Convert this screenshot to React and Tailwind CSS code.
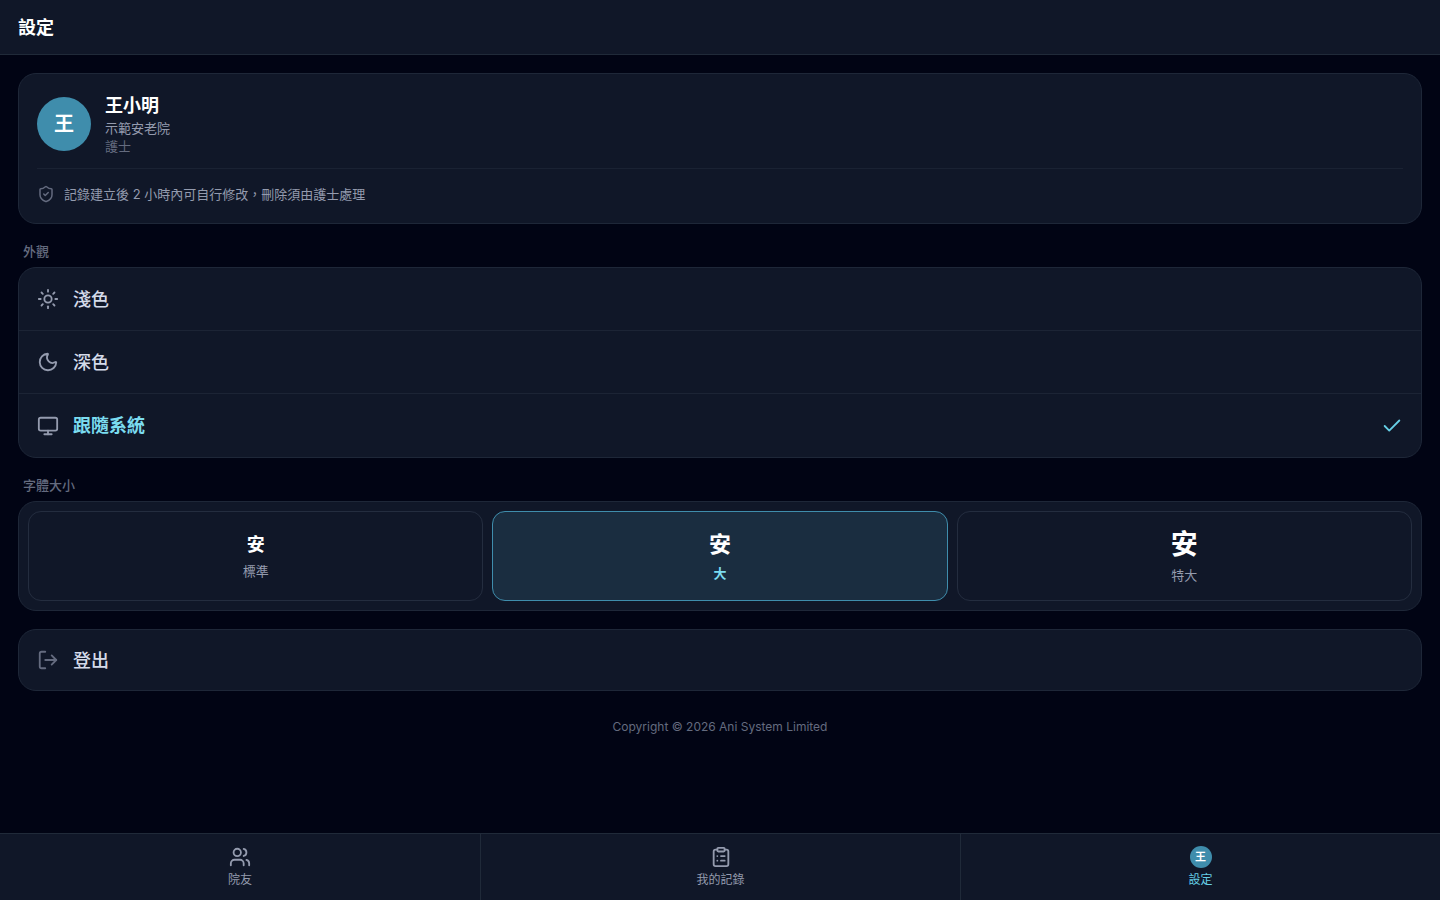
import { useState } from "react";
import { Sun, Moon, Monitor, Check, ShieldCheck, LogOut, Users, ClipboardList } from "lucide-react";

const THEMES = [
  { id: "light", label: "淺色", Icon: Sun },
  { id: "dark", label: "深色", Icon: Moon },
  { id: "system", label: "跟隨系統", Icon: Monitor },
];

const SIZES = [
  { id: "standard", label: "標準", sample: "text-[18px] leading-[27px]" },
  { id: "large", label: "大", sample: "text-[22px] leading-[31px]" },
  { id: "xlarge", label: "特大", sample: "text-[27px] leading-[35px]" },
];

const CARD = "rounded-[18px] border border-[#1e2738] bg-[#101728]";
const NAV_ITEM = "flex h-[66px] flex-col items-center gap-[3px] pt-3";

export default function App() {
  const [theme, setTheme] = useState("system");
  const [size, setSize] = useState("large");

  return (
    <div className="flex min-h-screen flex-col bg-[#010414] font-['Inter','Noto_Sans_CJK_TC',sans-serif] text-[#d5dbea]">
      <header className="border-b border-[#202a39] bg-[#101728] px-[18px] pt-[14px] pb-[13px]">
        <h1 className="text-[18px] leading-[27px] font-bold text-white">設定</h1>
      </header>

      <main className="flex flex-1 flex-col gap-[18px] p-[18px]">
        <section className={`${CARD} p-[18px]`}>
          <div className="flex items-center gap-[14px] pb-[13px]">
            <div className="flex size-[54px] shrink-0 items-center justify-center rounded-full bg-[#3f8dac] text-[20px] font-bold text-white">
              王
            </div>
            <div>
              <h2 className="text-[18px] leading-[27px] font-bold text-white">王小明</h2>
              <p className="text-[13px] leading-[18px] text-[#949bae]">示範安老院</p>
              <p className="text-[13px] leading-[18px] text-[#646b7f]">護士</p>
            </div>
          </div>
          <div className="flex items-center gap-[9px] border-t border-[#1a2233] pt-[14px]">
            <ShieldCheck className="size-[18px] shrink-0 text-[#646b7f]" />
            <p className="text-[13px] leading-[22px] text-[#949bae]">
              記錄建立後 2 小時內可自行修改，刪除須由護士處理
            </p>
          </div>
        </section>

        <section>
          <h2 className="mb-[7px] px-[5px] text-[13px] leading-[18px] font-medium text-[#646b7f]">外觀</h2>
          <div className={`${CARD} divide-y divide-[#1c2435] overflow-hidden`}>
            {THEMES.map(({ id, label, Icon }) => (
              <button
                key={id}
                type="button"
                aria-pressed={theme === id}
                onClick={() => setTheme(id)}
                className="flex h-[63px] w-full items-center gap-[14px] px-[18px] text-left text-[18px] leading-[27px] font-medium"
              >
                <Icon className="size-[22px] shrink-0 text-[#949bae]" />
                <span className={theme === id ? "flex-1 font-bold text-[#7bdcf0]" : "flex-1"}>{label}</span>
                {theme === id && <Check className="size-[22px] text-[#66cfe6]" />}
              </button>
            ))}
          </div>
        </section>

        <section>
          <h2 className="mb-[7px] px-[5px] text-[13px] leading-[18px] font-medium text-[#646b7f]">字體大小</h2>
          <div className={`${CARD} grid grid-cols-3 gap-[9px] p-[9px]`}>
            {SIZES.map(({ id, label, sample }) => (
              <button
                key={id}
                type="button"
                aria-pressed={size === id}
                onClick={() => setSize(id)}
                className={`flex h-[90px] flex-col items-center justify-center gap-1 rounded-[13px] border pb-[2px] ${
                  size === id ? "border-[#3f8dac] bg-[#1a2d40]" : "border-[#242d3f]"
                }`}
              >
                <span className={`${sample} font-bold text-white`}>安</span>
                <span
                  className={`text-[13px] leading-[18px] ${
                    size === id ? "font-bold text-[#7bdcf0]" : "text-[#949bae]"
                  }`}
                >
                  {label}
                </span>
              </button>
            ))}
          </div>
        </section>

        <button
          type="button"
          className={`${CARD} flex h-[62px] w-full items-center gap-[14px] px-[18px] text-left text-[18px] leading-[27px] font-medium`}
        >
          <LogOut className="size-[22px] shrink-0 text-[#646b7f]" />
          登出
        </button>

        <p className="pt-[9px] text-center text-[12px] leading-[18px] text-[#646b7f]">
          Copyright © 2026 Ani System Limited
        </p>
      </main>

      <nav className="sticky bottom-0 grid grid-cols-3 border-t border-[#202a39] bg-[#101728] text-[12px] leading-[18px] text-[#949bae]">
        <a href="#residents" className={NAV_ITEM}>
          <Users className="size-[22px]" />
          院友
        </a>
        <a href="#records" className={`${NAV_ITEM} border-l border-[#202a39]`}>
          <ClipboardList className="size-[22px]" />
          我的記錄
        </a>
        <a
          href="#settings"
          aria-current="page"
          className={`${NAV_ITEM} border-l border-[#202a39] text-[#66cfe6]`}
        >
          <span className="flex size-[22px] items-center justify-center rounded-full bg-[#3f8dac] text-[11px] font-bold text-white">
            王
          </span>
          設定
        </a>
      </nav>
    </div>
  );
}
